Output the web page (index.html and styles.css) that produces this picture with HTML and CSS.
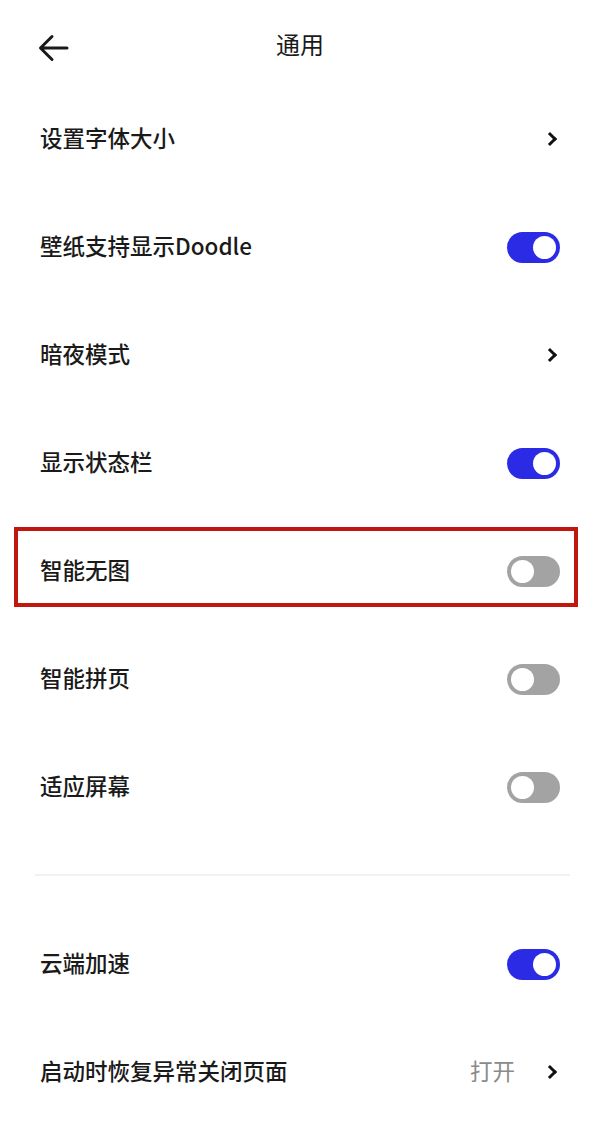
FILE: index.html
```html
<!DOCTYPE html>
<html lang="zh-CN">
<head>
<meta charset="utf-8">
<title>通用</title>
<link rel="stylesheet" href="styles.css">
</head>
<body>
<div class="page">
  <header class="header">
    <svg class="back" width="32" height="30" viewBox="0 0 32 30" aria-hidden="true">
      <path d="M30 15H4M15 3.5L3.5 15 15 26.5" fill="none" stroke="#1a1a1a" stroke-width="3" stroke-linecap="round" stroke-linejoin="round"/>
    </svg>
    <h1 class="title">通用</h1>
  </header>

  <section class="group">
    <div class="row"><span class="label">设置字体大小</span><span class="chev"></span></div>
    <div class="row"><span class="label">壁纸支持显示Doodle</span><span class="toggle on"></span></div>
    <div class="row"><span class="label">暗夜模式</span><span class="chev"></span></div>
    <div class="row"><span class="label">显示状态栏</span><span class="toggle on"></span></div>
    <div class="row highlighted"><span class="label">智能无图</span><span class="toggle"></span><span class="mark"></span></div>
    <div class="row"><span class="label">智能拼页</span><span class="toggle"></span></div>
    <div class="row"><span class="label">适应屏幕</span><span class="toggle"></span></div>
  </section>

  <div class="divider"></div>

  <section class="group">
    <div class="row"><span class="label">云端加速</span><span class="toggle on"></span></div>
    <div class="row"><span class="label">启动时恢复异常关闭页面</span><span class="right"><span class="value">打开</span><span class="chev"></span></span></div>
  </section>
</div>
</body>
</html>
```

FILE: styles.css
```css
* { box-sizing: border-box; }
html, body { margin: 0; padding: 0; background: #fff; }
body {
  font-family: "Noto Sans CJK SC", "Noto Sans", sans-serif;
  color: #1a1a1a;
}
.page { width: 600px; height: 1137px; overflow: hidden; }

.header {
  position: relative;
  height: 85px;
  padding-top: 9px;
  display: flex;
  align-items: center;
  justify-content: center;
}
.back { position: absolute; left: 37px; top: 33px; }
.title {
  margin: 0;
  font-size: 24px;
  font-weight: 400;
  line-height: 1;
  color: #1a1a1a;
  margin-top: -6px;
}

.row {
  position: relative;
  height: 108px;
  display: flex;
  align-items: center;
  justify-content: space-between;
  padding: 0 40px;
}
.label {
  font-size: 22.5px;
  font-weight: 500;
  line-height: 1;
  margin-top: -3px;
}

.chev {
  width: 10px;
  height: 10px;
  border-right: 3px solid #111;
  border-top: 3px solid #111;
  transform: rotate(45deg);
  margin-right: 5px;
  margin-top: -1px;
}

.right { display: flex; align-items: center; }
.value {
  font-size: 22.5px;
  color: #8a8a8a;
  margin-right: 30px;
  line-height: 1;
  margin-top: -3px;
}

.toggle {
  position: relative;
  width: 53px;
  height: 31px;
  border-radius: 16px;
  background: #a3a3a3;
  flex: none;
}
.toggle::after {
  content: "";
  position: absolute;
  top: 4px;
  left: 4px;
  width: 23px;
  height: 23px;
  border-radius: 50%;
  background: #fff;
}
.toggle.on { background: #2b2be6; }
.toggle.on::after { left: 26px; }

.mark {
  position: absolute;
  left: 14px;
  top: 10px;
  width: 564px;
  height: 80px;
  border: 4px solid #c0180f;
  pointer-events: none;
}

.divider {
  margin: 33px 30px 34px 35px;
  height: 2px;
  background: #f1f1f1;
}
```
